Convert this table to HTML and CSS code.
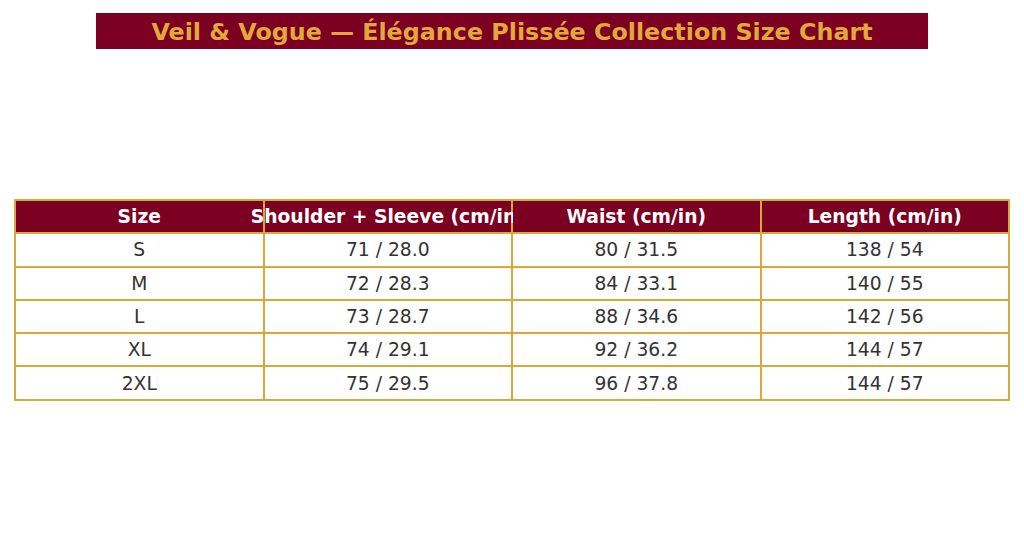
FILE: index.html
```html
<!DOCTYPE html>
<html>
<head>
<meta charset="utf-8">
<link rel="stylesheet" href="styles.css">
</head>
<body>
<div class="page">
  <h1 class="title">Veil &amp; Vogue — Élégance Plissée Collection Size Chart</h1>
  <table class="chart">
    <thead>
      <tr>
        <th><div class="hc">Size</div></th>
        <th><div class="hc">Shoulder + Sleeve (cm/in)</div></th>
        <th><div class="hc">Waist (cm/in)</div></th>
        <th><div class="hc">Length (cm/in)</div></th>
      </tr>
    </thead>
    <tbody>
      <tr><td>S</td><td>71 / 28.0</td><td>80 / 31.5</td><td>138 / 54</td></tr>
      <tr><td>M</td><td>72 / 28.3</td><td>84 / 33.1</td><td>140 / 55</td></tr>
      <tr><td>L</td><td>73 / 28.7</td><td>88 / 34.6</td><td>142 / 56</td></tr>
      <tr><td>XL</td><td>74 / 29.1</td><td>92 / 36.2</td><td>144 / 57</td></tr>
      <tr><td>2XL</td><td>75 / 29.5</td><td>96 / 37.8</td><td>144 / 57</td></tr>
    </tbody>
  </table>
</div>
</body>
</html>
```
FILE: styles.css
```css
html, body {
  margin: 0;
  padding: 0;
  background: #ffffff;
}
.page {
  width: 1024px;
  height: 533px;
  padding-top: 13px;
  box-sizing: border-box;
  font-family: "DejaVu Sans", sans-serif;
}
.title {
  width: 832px;
  height: 36px;
  margin: 0 0 0 96px;
  background: #7c0022;
  color: #e1a93b;
  font-size: 23.8px;
  font-weight: bold;
  line-height: 39px;
  text-align: center;
  white-space: nowrap;
}
.chart {
  margin: 150px 0 0 14px;
  width: 996px;
  table-layout: fixed;
  border-collapse: collapse;
}
.chart th, .chart td {
  border: 2px solid #d6a93a;
  height: 31.3px;
  padding: 0;
  text-align: center;
  white-space: nowrap;
  font-size: 18.7px;
}
.chart th {
  position: relative;
  background: #7c0022;
  color: #ffffff;
  font-weight: bold;
}
.hc {
  display: flex;
  justify-content: center;
  white-space: nowrap;
}
.chart td {
  color: #333333;
  background: #ffffff;
}
```
